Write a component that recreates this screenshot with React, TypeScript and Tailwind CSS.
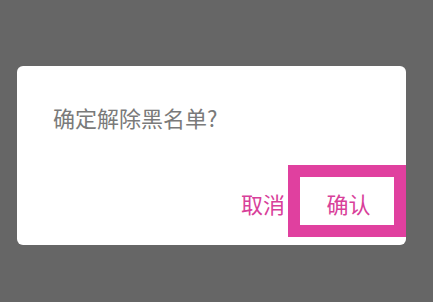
export default function App() {
  return (
    <div
      className="w-[433px] h-[302px] bg-[#666666] pt-[66px] pl-[17px]"
      style={{ fontFamily: '"Noto Sans CJK SC", "Noto Sans", sans-serif' }}
    >
      <div className="w-[389px] h-[179px] bg-white rounded-[6px] flex flex-col">
        <p className="pl-[36px] pt-[36px] text-[22px] leading-[30px] text-[#7a7a7a]">
          确定解除黑名单?
        </p>
        <div className="mt-auto mb-[8px] flex items-center justify-end">
          <button className="text-[22px] leading-[30px] text-[#d8409a] mr-[3px] pt-[3px]">
            取消
          </button>
          <button className="w-[118px] h-[72px] border-[12px] border-[#e0409f] bg-white flex items-center justify-center pl-[3px] pt-[3px] text-[22px] leading-[30px] text-[#d8409a]">
            确认
          </button>
        </div>
      </div>
    </div>
  );
}
